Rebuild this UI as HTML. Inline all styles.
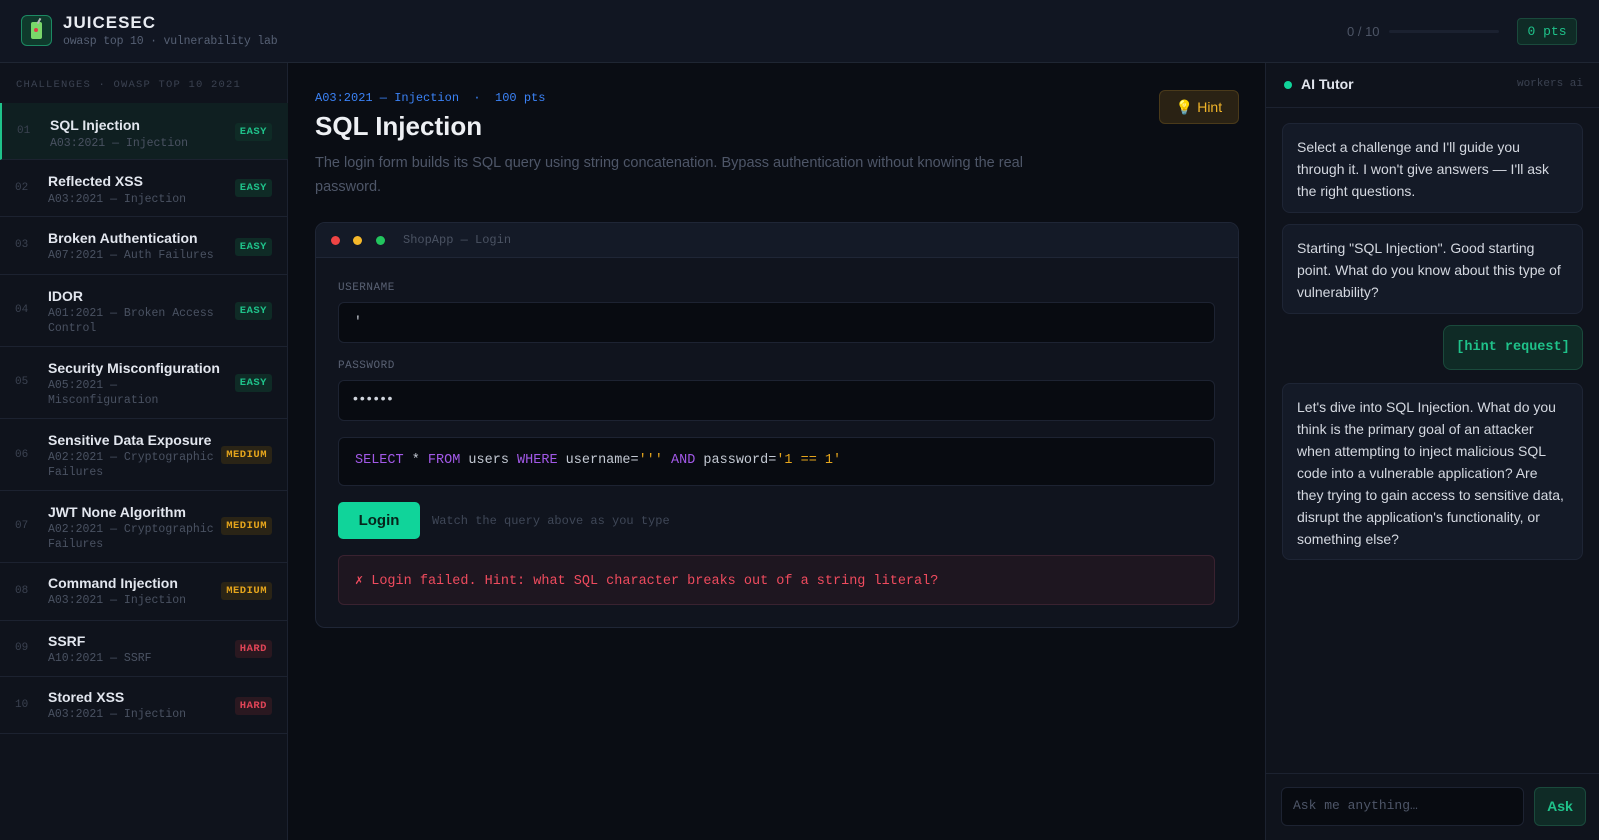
<!DOCTYPE html>
<html><head><meta charset="utf-8"><style>
*{box-sizing:border-box;margin:0;padding:0}
body{width:1599px;height:840px;overflow:hidden;background:#0a0d14;font-family:"Liberation Sans",sans-serif;color:#e5e7eb;position:relative}
.mono{font-family:"Liberation Mono","DejaVu Sans Mono",monospace}
.abs{position:absolute}
#hdr{left:0;top:0;width:1599px;height:63px;background:#111622;border-bottom:1px solid #1f2633}
#side{left:0;top:63px;width:288px;height:777px;background:#0f131c;border-right:1px solid #1c2230}
#right{left:1265px;top:63px;width:334px;height:777px;background:#0f131c;border-left:1px solid #1c2230}
.row{position:absolute;left:0;width:288px;border-bottom:1px solid #1c2230}
.row .n{position:absolute;left:15px;font-size:11px;color:#3b4251}
.row .t{position:absolute;left:48px;font-size:14px;font-weight:bold;color:#e2e6ee}
.row .s{position:absolute;left:48px;font-size:11.5px;color:#4a5262;line-height:15px;width:170px}
.badge{position:absolute;right:16px;font-size:10.5px;font-weight:bold;padding:3px 5px;border-radius:3px;letter-spacing:.5px;font-family:"Liberation Mono",monospace}
.easy{color:#1fc28a;background:#0f2b26}
.med{color:#e5a51c;background:#2a2416}
.hard{color:#e04457;background:#2a1820}
.inp{position:absolute;left:338px;width:877px;background:#080b11;border:1px solid #1d2332;border-radius:6px}
.lbl{position:absolute;left:338px;font-size:11px;color:#596173;letter-spacing:.5px}
.bub{position:absolute;left:1282px;width:301px;background:#141a27;border:1px solid #1e2535;border-radius:8px;padding:12px 18px 12px 14px;font-size:14px;line-height:22px;color:#d4d8e0}
</style></head><body>
<div id="hdr" class="abs">
  <div class="abs" style="left:21px;top:15px;width:31px;height:31px;border-radius:6px;background:#0f3a2c;border:1px solid #1c8a63"></div>
  <div class="abs" style="left:31px;top:22px;width:11px;height:17px;background:#7ad66a;border-radius:2px"></div>
  <div class="abs" style="left:34px;top:28px;width:4px;height:4px;background:#e03a4a;border-radius:50%"></div>
  <div class="abs" style="left:38px;top:18px;width:2px;height:6px;background:#b5b5b5;transform:rotate(30deg)"></div>
  <div class="abs" style="left:63px;top:13px;font-size:17px;font-weight:bold;letter-spacing:1px;color:#e8ebf1">JUICESEC</div>
  <div class="abs mono" style="left:63px;top:35px;font-size:11.5px;color:#566074;letter-spacing:-0.2px">owasp top 10 · vulnerability lab</div>
  <div class="abs" style="left:1347px;top:24px;font-size:13px;color:#4d5566">0 / 10</div>
  <div class="abs" style="left:1389px;top:30px;width:110px;height:3px;background:#1b2130;border-radius:2px"></div>
  <div class="abs mono" style="left:1517px;top:18px;width:60px;height:27px;border-radius:4px;background:#0f2b26;border:1px solid #1a4a3c;color:#1fc28a;font-size:13px;text-align:center;line-height:25px">0 pts</div>
</div>

<div id="side" class="abs">
  <div class="abs mono" style="left:16px;top:16px;font-size:10.5px;color:#3b4251;letter-spacing:1.2px">CHALLENGES · OWASP TOP 10 2021</div>
</div>
<div class="row" style="top:103px;height:57px;background:#0f1f21;border-left:2px solid #1fc28a"><span class="n mono" style="top:22px">01</span><span class="t" style="top:14px">SQL Injection</span><span class="s mono" style="top:33px">A03:2021 — Injection</span><span class="badge easy" style="top:20px">EASY</span></div>
<div class="row" style="top:160px;height:57px"><span class="n mono" style="top:22px">02</span><span class="t" style="top:13px">Reflected XSS</span><span class="s mono" style="top:32px">A03:2021 — Injection</span><span class="badge easy" style="top:19px">EASY</span></div>
<div class="row" style="top:217px;height:58px"><span class="n mono" style="top:22px">03</span><span class="t" style="top:13px">Broken Authentication</span><span class="s mono" style="top:31px">A07:2021 — Auth Failures</span><span class="badge easy" style="top:21px">EASY</span></div>
<div class="row" style="top:275px;height:72px"><span class="n mono" style="top:29px">04</span><span class="t" style="top:13px">IDOR</span><span class="s mono" style="top:31px">A01:2021 — Broken Access Control</span><span class="badge easy" style="top:27px">EASY</span></div>
<div class="row" style="top:347px;height:72px"><span class="n mono" style="top:29px">05</span><span class="t" style="top:13px">Security Misconfiguration</span><span class="s mono" style="top:31px">A05:2021 — Misconfiguration</span><span class="badge easy" style="top:27px">EASY</span></div>
<div class="row" style="top:419px;height:72px"><span class="n mono" style="top:30px">06</span><span class="t" style="top:13px">Sensitive Data Exposure</span><span class="s mono" style="top:31px">A02:2021 — Cryptographic Failures</span><span class="badge med" style="top:27px">MEDIUM</span></div>
<div class="row" style="top:491px;height:72px"><span class="n mono" style="top:29px">07</span><span class="t" style="top:13px">JWT None Algorithm</span><span class="s mono" style="top:31px">A02:2021 — Cryptographic Failures</span><span class="badge med" style="top:26px">MEDIUM</span></div>
<div class="row" style="top:563px;height:58px"><span class="n mono" style="top:22px">08</span><span class="t" style="top:12px">Command Injection</span><span class="s mono" style="top:30px">A03:2021 — Injection</span><span class="badge med" style="top:19px">MEDIUM</span></div>
<div class="row" style="top:621px;height:56px"><span class="n mono" style="top:21px">09</span><span class="t" style="top:12px">SSRF</span><span class="s mono" style="top:30px">A10:2021 — SSRF</span><span class="badge hard" style="top:19px">HARD</span></div>
<div class="row" style="top:677px;height:57px"><span class="n mono" style="top:22px">10</span><span class="t" style="top:12px">Stored XSS</span><span class="s mono" style="top:30px">A03:2021 — Injection</span><span class="badge hard" style="top:20px">HARD</span></div>

<!-- main -->
<div class="abs mono" style="left:315px;top:91px;font-size:12px;color:#3b82f6">A03:2021 — Injection &nbsp;· &nbsp;100 pts</div>
<div class="abs" style="left:315px;top:111px;font-size:26px;font-weight:bold;color:#eef0f4">SQL Injection</div>
<div class="abs" style="left:315px;top:151px;width:760px;font-size:14.5px;line-height:24px;color:#4e5668">The login form builds its SQL query using string concatenation. Bypass authentication without knowing the real password.</div>
<div class="abs" style="left:1159px;top:90px;width:80px;height:34px;border-radius:6px;background:#2a2214;border:1px solid #4a3a1a;color:#f0b429;font-size:14px;text-align:center;line-height:32px">💡 Hint</div>

<div class="abs" style="left:315px;top:222px;width:924px;height:406px;background:#10141e;border:1px solid #1f2636;border-radius:10px;overflow:hidden">
  <div style="height:35px;background:#141a27;border-bottom:1px solid #1f2636;position:relative">
    <span class="abs" style="left:15px;top:13px;width:9px;height:9px;border-radius:50%;background:#ef4444"></span>
    <span class="abs" style="left:37px;top:13px;width:9px;height:9px;border-radius:50%;background:#f5b82a"></span>
    <span class="abs" style="left:60px;top:13px;width:9px;height:9px;border-radius:50%;background:#22c55e"></span>
    <span class="abs mono" style="left:87px;top:10px;font-size:12px;color:#4a5262">ShopApp — Login</span>
  </div>
</div>
<div class="lbl mono" style="top:282px">USERNAME</div>
<div class="inp mono" style="top:302px;height:41px;padding:11px 15px;color:#cfd4dc;font-size:13px">'</div>
<div class="lbl mono" style="top:360px">PASSWORD</div>
<div class="inp" style="top:380px;height:41px;padding:9px 14px;color:#cfd4dc;font-size:14px;letter-spacing:2px">••••••</div>
<div class="inp mono" style="top:437px;height:49px;padding:15px 16px;font-size:13.5px;color:#c3c9d3"><span style="color:#a259e8">SELECT</span> * <span style="color:#a259e8">FROM</span> users <span style="color:#a259e8">WHERE</span> username=<span style="color:#e5a51c">'''</span> <span style="color:#a259e8">AND</span> password=<span style="color:#e5a51c">'1 == 1'</span></div>
<div class="abs" style="left:338px;top:502px;width:82px;height:37px;border-radius:5px;background:#10d49a;color:#06241b;font-size:15px;font-weight:bold;text-align:center;line-height:37px">Login</div>
<div class="abs mono" style="left:432px;top:514px;font-size:12px;color:#3f4757">Watch the query above as you type</div>
<div class="inp mono" style="top:555px;height:50px;background:#1e1620;border-color:#3a2230;padding:16px 16px;font-size:13.5px;color:#ef4b5e">✗ Login failed. Hint: what SQL character breaks out of a string literal?</div>

<!-- right -->
<div id="right" class="abs">
  <div class="abs" style="left:0;top:44px;width:334px;height:1px;background:#1c2230"></div>
  <div class="abs" style="left:18px;top:18px;width:8px;height:8px;border-radius:50%;background:#10d49a"></div>
  <div class="abs" style="left:35px;top:13px;font-size:14px;font-weight:bold;color:#e2e6ee">AI Tutor</div>
  <div class="abs mono" style="right:16px;top:15px;font-size:11px;color:#3b4251">workers ai</div>
  <div class="abs" style="left:0;top:710px;width:334px;height:1px;background:#1c2230"></div>
  <div class="abs mono" style="left:15px;top:724px;width:243px;height:39px;background:#080b11;border:1px solid #1d2332;border-radius:6px;padding:10px 11px;font-size:13px;color:#4e5668">Ask me anything…</div>
  <div class="abs" style="left:268px;top:724px;width:52px;height:39px;background:#0f2b26;border:1px solid #1a4a3c;border-radius:6px;color:#1fc28a;font-weight:bold;font-size:14px;text-align:center;line-height:37px">Ask</div>
</div>
<div class="bub" style="top:123px;height:90px">Select a challenge and I'll guide you through it. I won't give answers — I'll ask the right questions.</div>
<div class="bub" style="top:224px;height:90px">Starting "SQL Injection". Good starting point. What do you know about this type of vulnerability?</div>
<div class="abs mono" style="left:1443px;top:325px;width:140px;height:45px;background:#0f2b26;border:1px solid #1a4a3c;border-radius:8px;color:#1fc28a;font-size:13.5px;font-weight:bold;text-align:center;line-height:43px">[hint request]</div>
<div class="bub" style="top:383px;height:177px">Let's dive into SQL Injection. What do you think is the primary goal of an attacker when attempting to inject malicious SQL code into a vulnerable application? Are they trying to gain access to sensitive data, disrupt the application's functionality, or something else?</div>
</body></html>
